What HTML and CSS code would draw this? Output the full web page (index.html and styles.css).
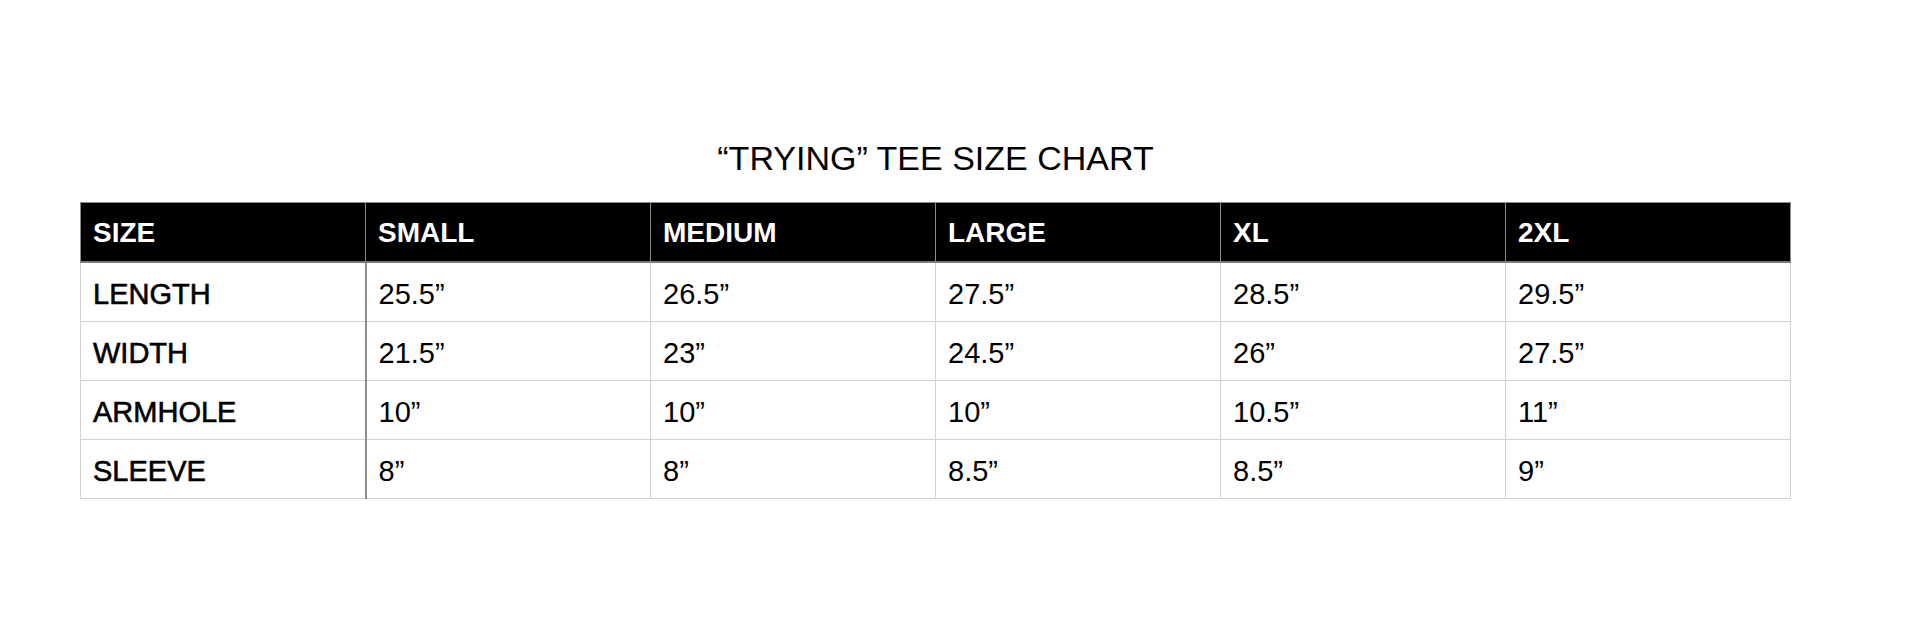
FILE: index.html
```html
<!DOCTYPE html>
<html>
<head>
<meta charset="utf-8">
<link rel="stylesheet" href="styles.css">
</head>
<body>
<div class="chart">
  <h1 class="title">“TRYING” TEE SIZE CHART</h1>
  <table class="sizes">
    <thead>
      <tr><th>SIZE</th><th>SMALL</th><th>MEDIUM</th><th>LARGE</th><th>XL</th><th>2XL</th></tr>
    </thead>
    <tbody>
      <tr><td class="label">LENGTH</td><td>25.5”</td><td>26.5”</td><td>27.5”</td><td>28.5”</td><td>29.5”</td></tr>
      <tr><td class="label">WIDTH</td><td>21.5”</td><td>23”</td><td>24.5”</td><td>26”</td><td>27.5”</td></tr>
      <tr><td class="label">ARMHOLE</td><td>10”</td><td>10”</td><td>10”</td><td>10.5”</td><td>11”</td></tr>
      <tr><td class="label">SLEEVE</td><td>8”</td><td>8”</td><td>8.5”</td><td>8.5”</td><td>9”</td></tr>
    </tbody>
  </table>
</div>
</body>
</html>
```

FILE: styles.css
```css
html, body {
  margin: 0;
  padding: 0;
  background: #fff;
}

body {
  font-family: "Liberation Sans", Arial, sans-serif;
  color: #000;
}

.chart {
  width: 1711px;
  margin-left: 80px;
  padding-top: 138px;
}

.title {
  margin: 0 0 24px;
  font-size: 34px;
  line-height: 40px;
  font-weight: 400;
  text-align: center;
}

.sizes {
  width: 1711px;
  border-collapse: collapse;
  table-layout: fixed;
}

.sizes th,
.sizes td {
  text-align: left;
  padding: 0 0 0 12px;
  vertical-align: middle;
}

.sizes th {
  background: #000;
  color: #fff;
  font-size: 28px;
  font-weight: 700;
  height: 56px;
  padding-top: 2px;
  border: 1px solid #8a8a8a;
  border-bottom: 2px solid #7a7a7a;
}

.sizes td {
  font-size: 29px;
  height: 54px;
  padding-top: 4px;
  border: 1px solid #d2d2d2;
}

.sizes td.label {
  -webkit-text-stroke: 0.6px #000;
  border-right: 2px solid #8e8e8e;
}
```
